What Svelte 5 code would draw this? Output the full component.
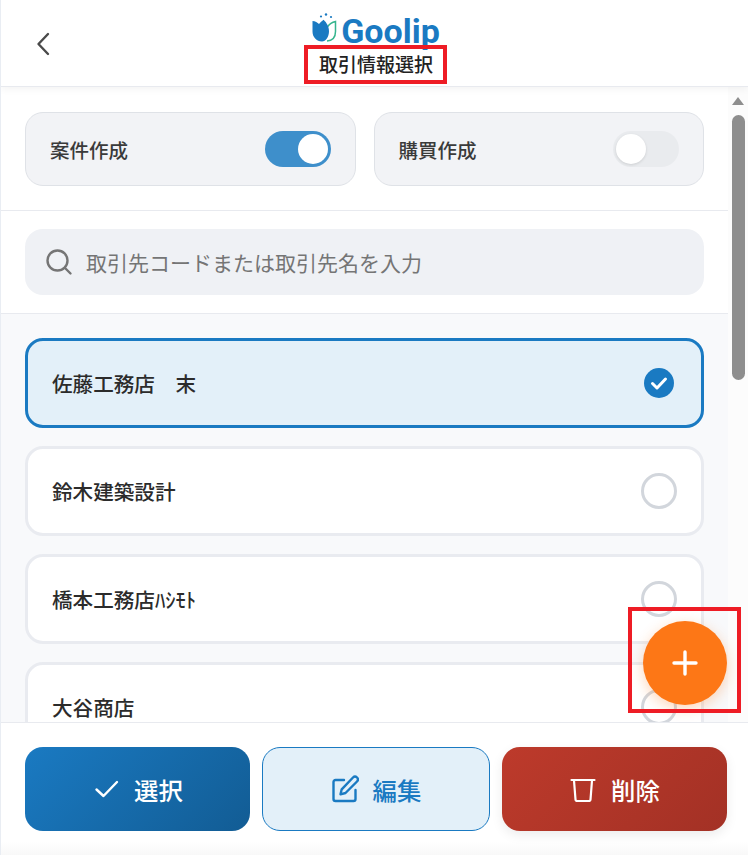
<script>
  const customers = [
    { name: "佐藤工務店　末", selected: true },
    { name: "鈴木建築設計", selected: false },
    { name: "橋本工務店ﾊｼﾓﾄ", selected: false },
    { name: "大谷商店", selected: false }
  ];
</script>

<div class="page">
  <header class="header">
    <button class="back" aria-label="戻る">
      <svg width="18" height="26" viewBox="0 0 18 26" fill="none" stroke="#4a4a4a" stroke-width="2.4" stroke-linecap="round" stroke-linejoin="round"><path d="M14 3 4.5 13 14 23" /></svg>
    </button>
    <div class="brand">
      <div class="logo">
        <svg width="27" height="30" viewBox="0 0 27 30">
          <circle cx="9" cy="3.5" r="1.1" fill="#1a7ac2" />
          <circle cx="14" cy="1.5" r="1.2" fill="#1a7ac2" />
          <circle cx="19" cy="4" r="1.1" fill="#1a7ac2" />
          <path d="M15 28c5.5-.4 8.5-4 8.5-9.500V8.500c-3.500.7-6 2.300-7.700 5" fill="none" stroke="#35b58e" stroke-width="1.5" />
          <path d="M0.500 8c2.700.3 5 1.400 6.500 3 1.300-1.700 2.800-3 4.600-4.300 3 3 5.400 6.500 5.400 11.500 0 5.800-3.300 10.300-7 10.300C4.500 28.500 .5 24 .5 18.500z" fill="#1a7ac2" />
        </svg>
        <span class="logo-text">Goolip</span>
      </div>
      <h1 class="title">取引情報選択</h1>
    </div>
  </header>

  <div class="body">
    <main class="content">
      <section class="toggles">
        <div class="toggle-card">
          <span>案件作成</span>
          <span class="switch on"><i></i></span>
        </div>
        <div class="toggle-card">
          <span>購買作成</span>
          <span class="switch"><i></i></span>
        </div>
      </section>

      <section class="search-wrap">
        <div class="search">
          <svg width="28" height="28" viewBox="0 0 28 28" fill="none" stroke="#757575" stroke-width="2.4" stroke-linecap="round"><circle cx="12.5" cy="12.5" r="10" /><path d="m20 20 5.500 5.500" /></svg>
          <span>取引先コードまたは取引先名を入力</span>
        </div>
      </section>

      <ul class="list">
        {#each customers as c}
          <li class="item" class:selected={c.selected}>
            <span>{c.name}</span>
            {#if c.selected}
              <svg class="mark" width="30" height="30" viewBox="0 0 30 30"><circle cx="15" cy="15" r="15" fill="#1a7ac2" /><path d="m8.500 15.500 4.500 4.500 8.500-9" fill="none" stroke="#fff" stroke-width="3" stroke-linecap="round" stroke-linejoin="round" /></svg>
            {:else}
              <span class="radio"></span>
            {/if}
          </li>
        {/each}
      </ul>
    </main>

    <div class="scrollbar">
      <span class="arrow"></span>
      <span class="thumb"></span>
    </div>
  </div>

  <footer class="footer">
    <button class="btn primary">
      <svg width="26" height="20" viewBox="0 0 26 20" fill="none" stroke="#fff" stroke-width="2.4" stroke-linecap="round" stroke-linejoin="round"><path d="m2.500 10.500 7 6.500 13.500-14" /></svg>
      選択
    </button>
    <button class="btn outline">
      <svg width="28" height="28" viewBox="0 0 28 28" fill="none" stroke="#1a7ac2" stroke-width="2.4" stroke-linecap="round" stroke-linejoin="round"><path d="M13 5H4.500A2 2 0 0 0 2.500 7v17a2 2 0 0 0 2 2h18a2 2 0 0 0 2-2v-9" /><path d="M22 2.500a2.800 2.800 0 0 1 4 4L14.500 18l-5 1.300 1.200-5z" /></svg>
      編集
    </button>
    <button class="btn danger">
      <svg width="26" height="26" viewBox="0 0 26 26" fill="none" stroke="#fff" stroke-width="2.2" stroke-linecap="round" stroke-linejoin="round"><path d="M1.500 4h23" /><path d="M4 4.500l1.500 19a1.500 1.500 0 0 0 1.500 1.500h12a1.500 1.500 0 0 0 1.500-1.500L22 4.500" /></svg>
      削除
    </button>
  </footer>

  <div class="note note-title"></div>
  <button class="fab" aria-label="追加">
    <svg width="26" height="26" viewBox="0 0 26 26" stroke="#fff" stroke-width="3.4" stroke-linecap="round"><path d="M13 2v22M2 13h22" /></svg>
  </button>
  <div class="note note-fab"></div>
</div>

<style>
  :global(body) {
    margin: 0;
    background: #fff;
  }

  .page {
    position: relative;
    width: 748px;
    height: 855px;
    box-sizing: border-box;
    border-left: 1px solid #e9edf3;
    display: flex;
    flex-direction: column;
    overflow: hidden;
    font-family: "Noto Sans CJK JP", "Noto Sans", sans-serif;
    color: #2b2b2b;
  }

  .header {
    position: relative;
    z-index: 2;
    height: 87px;
    flex: none;
    box-sizing: border-box;
    border-bottom: 1px solid #e8eaef;
    box-shadow: 0 2px 8px rgba(0, 0, 0, 0.05);
    background: #fff;
    display: flex;
    justify-content: center;
  }

  .back {
    position: absolute;
    left: 33px;
    top: 31px;
    padding: 0;
    border: 0;
    background: none;
    line-height: 0;
  }

  .brand {
    display: flex;
    flex-direction: column;
    align-items: center;
    padding-top: 12px;
    margin-left: 3px;
  }

  .logo {
    display: flex;
    align-items: center;
    gap: 2px;
    height: 32px;
  }

  .logo-text {
    font-family: Roboto, sans-serif;
    font-weight: 700;
    font-size: 34px;
    line-height: 32px;
    color: #1a7ac2;
    margin-top: 5px;
  }

  .title {
    margin: 7px 0 0;
    font-size: 19px;
    line-height: 26px;
    font-weight: 500;
    color: #222;
  }

  .body {
    flex: 1;
    min-height: 0;
    display: flex;
  }

  .content {
    flex: 1;
    min-width: 0;
    overflow: hidden;
  }

  .toggles {
    display: flex;
    gap: 18px;
    padding: 25px 24px 24px;
    border-bottom: 1px solid #e8eaef;
  }

  .toggle-card {
    flex: 1;
    height: 74px;
    box-sizing: border-box;
    border: 1px solid #dfe2e7;
    border-radius: 18px;
    background: #f2f3f6;
    padding: 0 24px;
    display: flex;
    align-items: center;
    justify-content: space-between;
    font-size: 19.5px;
    font-weight: 500;
    color: #3a3a3a;
  }

  .switch {
    width: 66px;
    height: 36px;
    border-radius: 18px;
    background: #e9ebee;
    display: flex;
    align-items: center;
    padding: 0 3px;
    box-sizing: border-box;
  }

  .switch i {
    width: 30px;
    height: 30px;
    border-radius: 50%;
    background: #fff;
    box-shadow: 0 1px 3px rgba(0, 0, 0, 0.12);
  }

  .switch.on {
    background: #3e8fcb;
    justify-content: flex-end;
  }

  .switch.on i {
    box-shadow: none;
  }

  .search-wrap {
    padding: 18px 24px;
    border-bottom: 1px solid #e8eaef;
  }

  .search {
    height: 66px;
    border-radius: 18px;
    background: #eff1f5;
    padding: 0 20px;
    display: flex;
    align-items: center;
    gap: 13px;
    font-size: 21px;
    color: #757575;
  }

  .list {
    margin: 0;
    padding: 24px 24px;
    list-style: none;
    background: #f8f9fb;
    display: flex;
    flex-direction: column;
    gap: 18px;
  }

  .item {
    height: 90px;
    flex: none;
    box-sizing: border-box;
    border: 3px solid #e9ebf0;
    border-radius: 18px;
    background: #fff;
    padding: 0 24px;
    display: flex;
    align-items: center;
    justify-content: space-between;
    font-size: 20.6px;
    font-weight: 500;
    color: #2b2b2b;
  }

  .item.selected {
    border-color: #1a7ac2;
    background: #e3f0f9;
  }

  .mark {
    margin-right: 3px;
  }

  .radio {
    width: 36px;
    height: 36px;
    box-sizing: border-box;
    border: 3px solid #d2d6dc;
    border-radius: 50%;
  }

  .scrollbar {
    width: 20px;
    flex: none;
    background: #fcfcfc;
    display: flex;
    flex-direction: column;
    align-items: center;
    padding-top: 10px;
    box-sizing: border-box;
  }

  .arrow {
    width: 0;
    height: 0;
    border-left: 6px solid transparent;
    border-right: 6px solid transparent;
    border-bottom: 8px solid #8e8e8e;
  }

  .thumb {
    width: 13px;
    height: 265px;
    margin-top: 10px;
    border-radius: 7px;
    background: #8e8e8e;
  }

  .footer {
    position: relative;
    z-index: 2;
    height: 133px;
    flex: none;
    box-sizing: border-box;
    border-top: 1px solid #e8eaef;
    background: linear-gradient(#fff 90%, #f8f8f8);
    padding: 24px 0 0 24px;
    display: flex;
    align-items: flex-start;
    gap: 12px;
  }

  .btn {
    flex: 0 0 225px;
    height: 84px;
    box-sizing: border-box;
    border: 0;
    border-radius: 18px;
    display: flex;
    align-items: center;
    justify-content: center;
    gap: 14px;
    padding: 0;
    font-family: inherit;
    font-size: 24.4px;
    font-weight: 500;
    color: #fff;
  }

  .primary {
    padding-left: 2px;
    background: linear-gradient(135deg, #1a7ac2, #125c94);
  }

  .outline {
    flex-basis: 228px;
    border: 1px solid #1a7ac2;
    background: #e3f0f9;
    color: #1a7ac2;
  }

  .danger {
    gap: 15px;
    padding-left: 1px;
    background: linear-gradient(135deg, #bd3a2b, #a33125);
    box-shadow: 0 4px 12px rgba(0, 0, 0, 0.08);
  }

  .fab {
    position: absolute;
    z-index: 3;
    left: 642px;
    top: 621px;
    width: 84px;
    height: 84px;
    padding: 0;
    border: 0;
    border-radius: 50%;
    background: #fd7716;
    box-shadow: 0 4px 14px rgba(253, 119, 22, 0.3);
    display: flex;
    align-items: center;
    justify-content: center;
  }

  .note {
    position: absolute;
    z-index: 4;
    box-sizing: border-box;
    border: 4px solid #ee1c25;
  }

  .note-title {
    left: 303px;
    top: 45px;
    width: 143px;
    height: 39px;
  }

  .note-fab {
    left: 627px;
    top: 607px;
    width: 113px;
    height: 106px;
  }
</style>
